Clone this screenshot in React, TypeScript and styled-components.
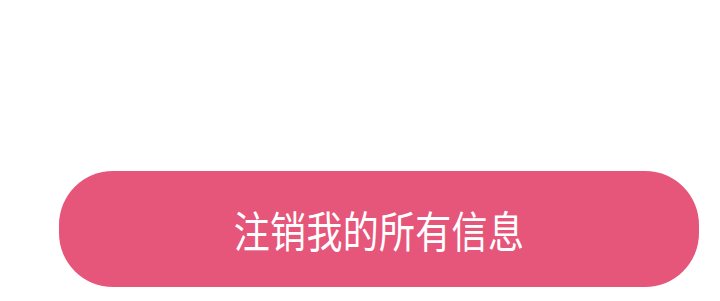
import React from "react";
import styled, { createGlobalStyle } from "styled-components";

const GlobalStyle = createGlobalStyle`
  html, body {
    margin: 0;
    padding: 0;
    background: #ffffff;
  }
  body {
    font-family: "Noto Sans CJK SC", "Noto Sans", sans-serif;
  }
`;

//ページ全体
const Page = styled.div`
  width: 720px;
  height: 301px;
  box-sizing: border-box;
  padding: 171px 21px 0 59px;
  background: #ffffff;
`;

//注销ボタン
const LogoutButton = styled.button`
  display: flex;
  align-items: center;
  justify-content: center;
  width: 640px;
  height: 116px;
  padding: 0;
  border: none;
  border-radius: 54px;
  background: #e6557a;
  color: #ffffff;
  cursor: pointer;
`;

//ボタンラベル
const Label = styled.span`
  display: inline-block;
  font-family: "Noto Sans CJK SC", sans-serif;
  font-size: 36px;
  font-weight: 400;
  letter-spacing: 0.3px;
  line-height: 1;
  transform: scaleY(1.2);
`;

export default function App() {
  return (
    <>
      <GlobalStyle />
      <Page>
        <LogoutButton>
          <Label>注销我的所有信息</Label>
        </LogoutButton>
      </Page>
    </>
  );
}
